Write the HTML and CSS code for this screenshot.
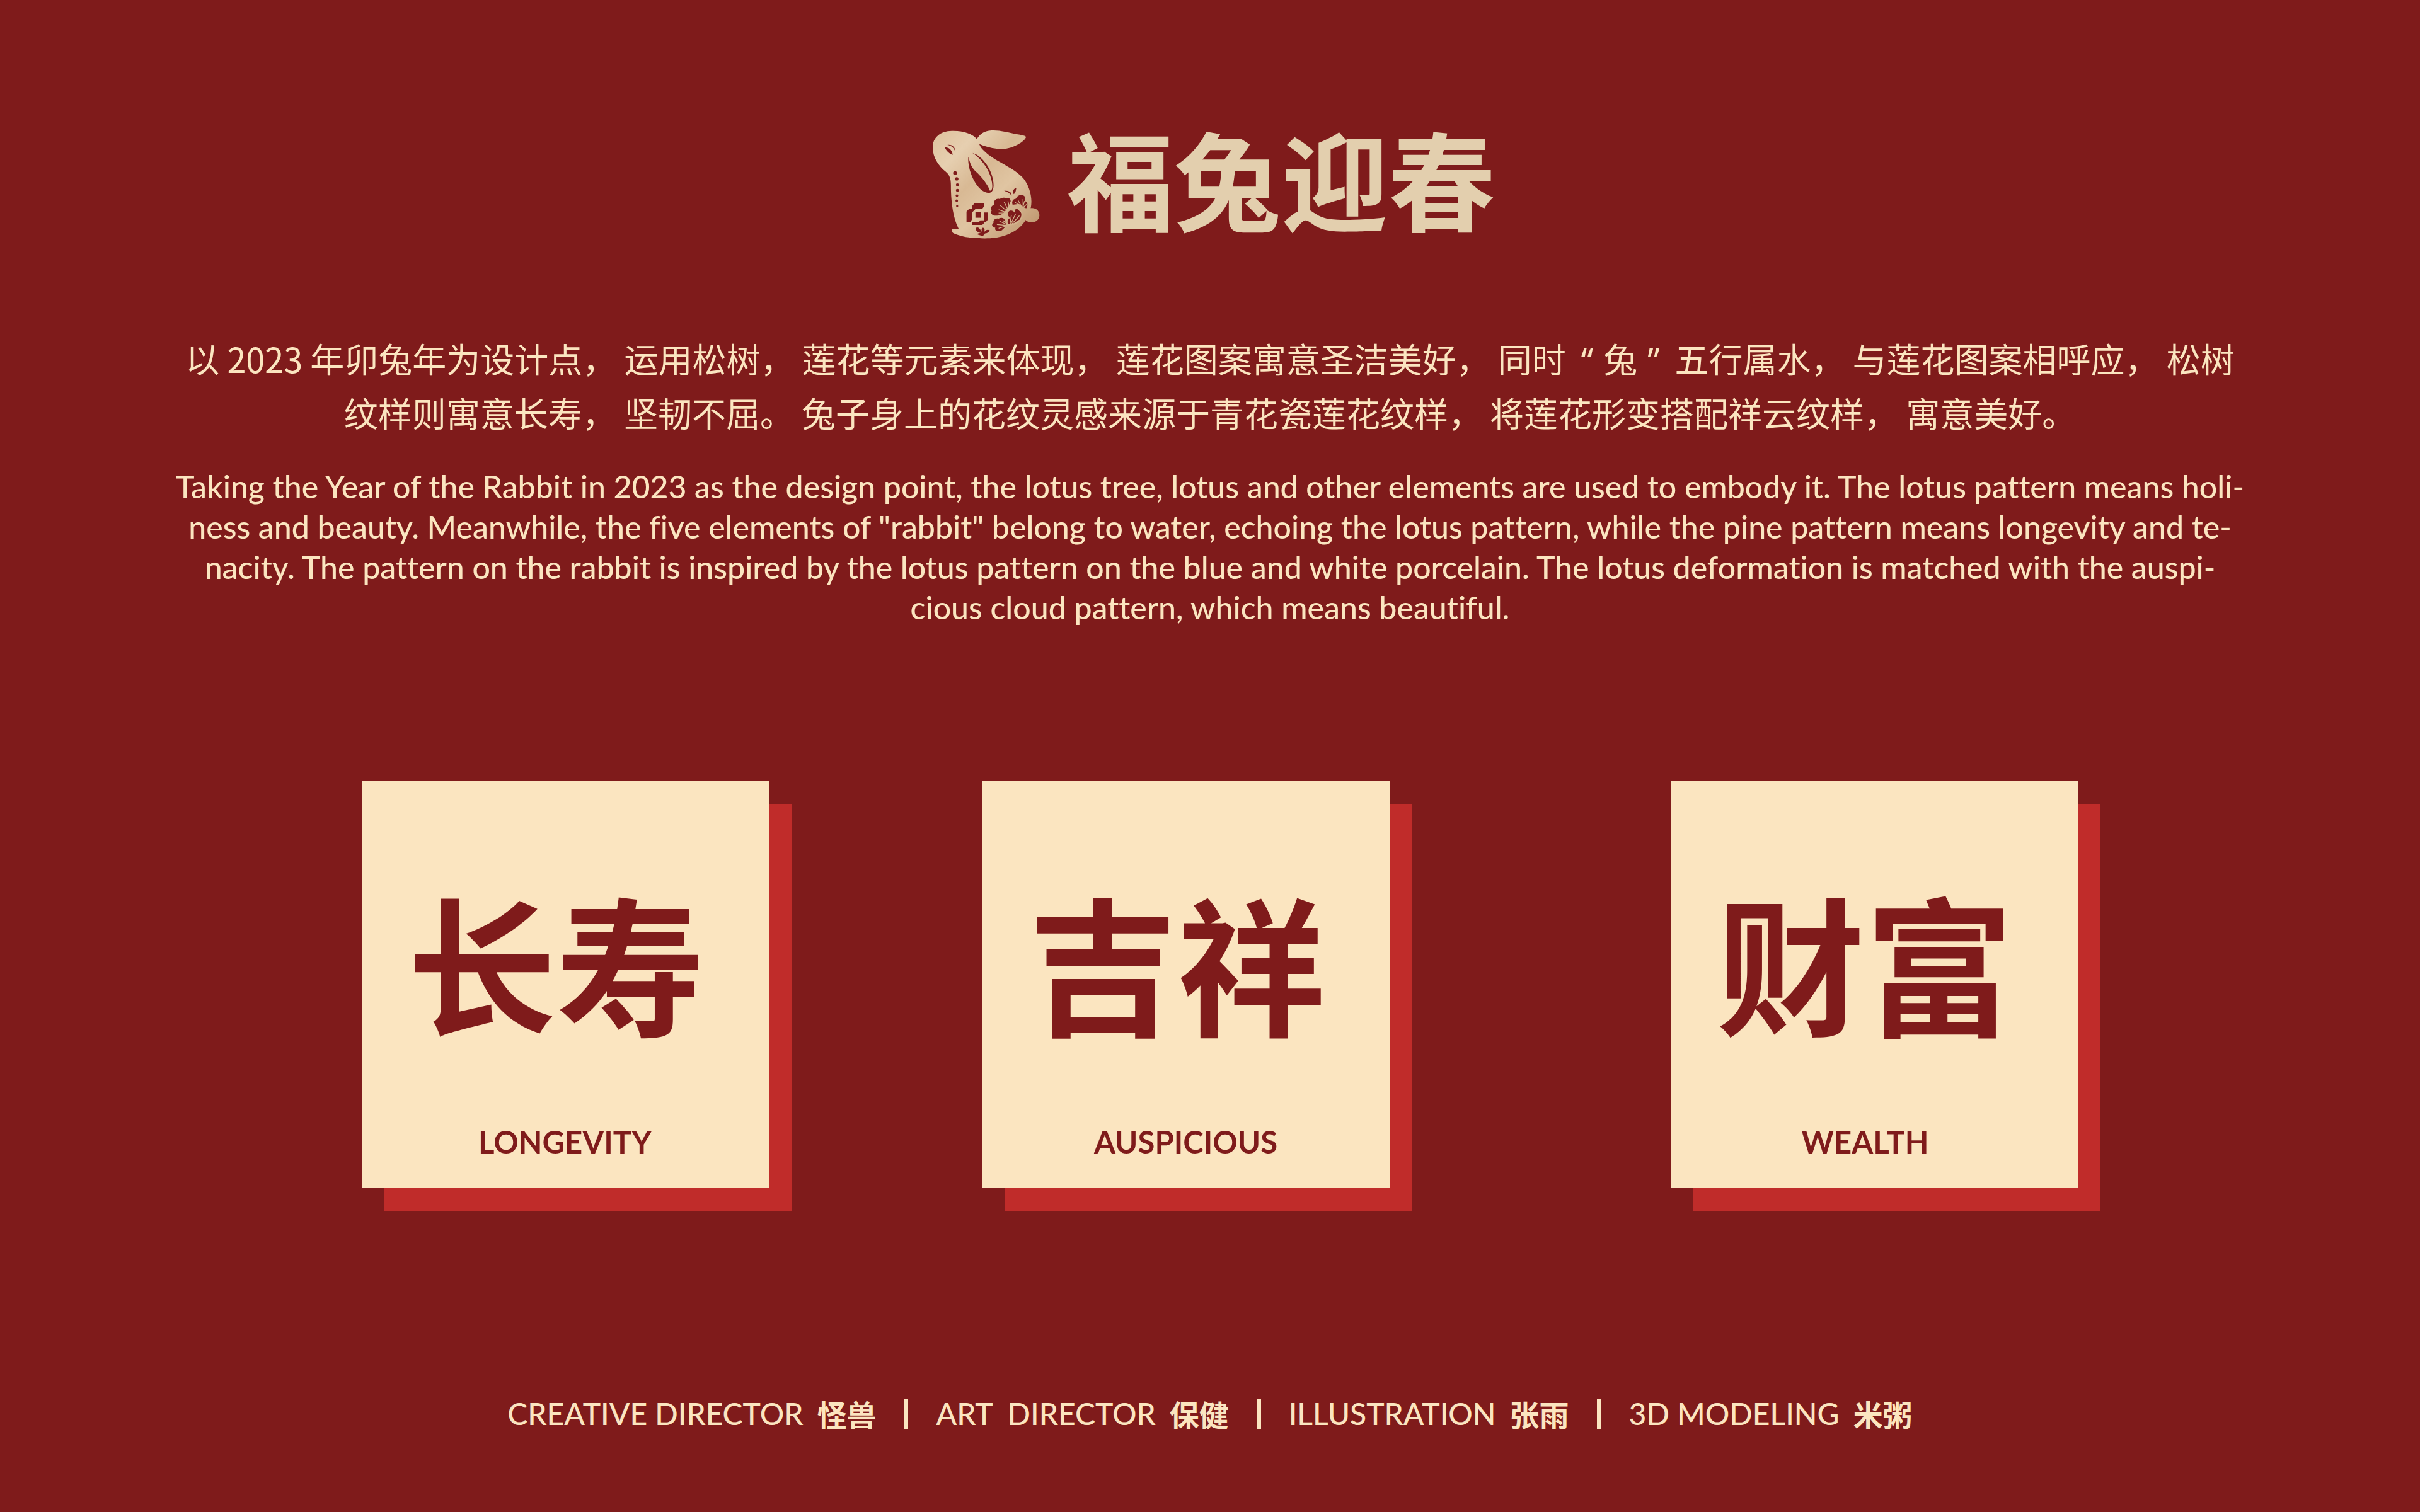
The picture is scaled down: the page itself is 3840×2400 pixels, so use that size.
FILE: index.html
```html
<!DOCTYPE html>
<html lang="zh-CN">
<head>
<meta charset="utf-8">
<meta name="viewport" content="width=device-width, initial-scale=1">
<title>福兔迎春</title>
<link rel="stylesheet" href="styles.css">
</head>
<body>
<main class="page">
  <header class="masthead">
    <svg class="rabbit" viewBox="57 48 510 516" aria-hidden="true">
      <defs>
        <linearGradient id="gold" x1="0" y1="0" x2="1" y2="1">
          <stop offset="0" stop-color="#dfc09b"/>
          <stop offset=".22" stop-color="#e6cfb0"/>
          <stop offset=".42" stop-color="#d8b994"/>
          <stop offset=".6" stop-color="#e0c5a2"/>
          <stop offset="1" stop-color="#b98f66"/>
        </linearGradient>
      </defs>
      <!-- silhouette -->
      <path fill="url(#gold)" d="M268 92C245 65 200 52 150 53C95 54 60 85 60 130C60 180 90 222 122 246C150 268 145 300 146 340C148 390 155 462 182 514L158 514C145 516 148 530 160 536C200 555 260 561 330 559C410 554 470 520 497 473C505 482 520 485 533 484C552 480 563 465 562 448C560 425 542 414 521 417C532 370 515 310 485 275C440 225 350 195 305 150C290 138 282 125 279 115C300 125 350 140 390 139C440 135 490 105 499 83C499 75 480 73 450 68C410 60 370 48 330 52C300 55 280 70 268 92Z"/>
      <g class="cut">
        <!-- eye -->
        <path d="M117 130C135 130 150 140 154 166C138 160 124 148 117 130Z"/>
        <path d="M129 119C152 116 166 130 167 153C160 132 148 122 129 119Z"/>
        <!-- folded ear -->
        <path d="M228 175C220 230 265 344 325 345C360 344 350 260 310 207C290 178 265 162 247 157C280 178 318 220 334 275C344 310 342 335 329 335C322 312 292 270 262 244C240 222 234 200 228 175Z"/>
        <!-- beads -->
        <circle cx="165" cy="252" r="9"/><circle cx="173" cy="279" r="8"/><circle cx="176" cy="307" r="7"/><circle cx="176" cy="333" r="7"/><circle cx="174" cy="358" r="6"/><circle cx="173" cy="382" r="6"/><circle cx="175" cy="407" r="5"/>
        <!-- cloud knot -->
        <path d="M256 395H303V407L293 420H262L245 437V468L238 483H219V433L230 422H245V407Z"/>
        <path d="M261 436H286V462H261Z"/>
        <path d="M302 437H320V470L311 481H302V487L293 496H246V482H278L284 474H302Z"/>
        <!-- stamens and leaf -->
        <path d="M396 334C420 334 433 342 431 359C424 345 410 342 396 334ZM454 321C435 327 438 341 441 351C452 344 450 334 454 321Z"/>
        <path d="M262 510C272 505 276 507 284 518L292 529C290 520 288 512 296 509C306 511 305 518 302 530C308 520 318 516 328 521C325 532 315 535 306 536C302 545 296 549 288 546L274 542C268 538 272 534 288 534C272 532 262 524 262 510Z"/>
        <!-- blossoms -->
        <path d="M352 452C337 450 331 438 337 429C330 415 338 404 349 402C344 382 359 368 375 374C386 366 398 366 404 371C414 364 426 370 427 384C420 404 408 425 393 440C382 450 366 452 352 452Z"/>
        <path d="M436 401C431 388 436 374 451 373C460 354 480 348 493 362C498 372 495 380 494 384C508 389 509 405 500 418L483 410L466 397Z"/>
        <path d="M371 525C353 526 352 513 355 509C338 507 335 492 346 486C344 472 355 462 370 466C384 460 395 462 400 475C412 500 398 522 371 525Z"/>
        <path class="bloom" d="M413 494C404 478 412 467 419 463C406 449 408 430 425 425C434 424 440 428 443 431C444 416 462 413 469 427C481 433 483 448 477 462C468 482 442 499 413 494Z"/>
      </g>
      <g class="rays">
        <path d="M405 436L370 424M408 430L378 404M412 420L396 388M420 412L414 384M405 440L370 440M478 412L448 390M479 412L462 381M480 412L480 374M484 412L492 384M484 414L504 398M408 498L362 494M408 494L374 478M408 500L370 512M408 488L389 474M406 504L388 521"/>
        <path d="M424 490L430 450M427 492L450 444M432 492L468 452M436 494L466 474"/>
      </g>
    </svg>
    <h1 class="title">福兔迎春</h1>
  </header>

  <section class="intro">
    <p class="intro-zh">以 2023 年卯兔年为设计点， 运用松树， 莲花等元素来体现， 莲花图案寓意圣洁美好， 同时<span class="quote open">“</span>兔<span class="quote close">”</span>五行属水， 与莲花图案相呼应， 松树<br>纹样则寓意长寿， 坚韧不屈。 兔子身上的花纹灵感来源于青花瓷莲花纹样， 将莲花形变搭配祥云纹样， 寓意美好。</p>
    <p class="intro-en" lang="en">Taking the Year of the Rabbit in 2023 as the design point, the lotus tree, lotus and other elements are used to embody it. The lotus pattern means holi-<br>ness and beauty. Meanwhile, the five elements of "rabbit" belong to water, echoing the lotus pattern, while the pine pattern means longevity and te-<br>nacity. The pattern on the rabbit is inspired by the lotus pattern on the blue and white porcelain. The lotus deformation is matched with the auspi-<br>cious cloud pattern, which means beautiful.</p>
  </section>

  <section class="cards">
    <article class="card">
      <h2 class="card-word">长寿</h2>
      <p class="card-label" lang="en">LONGEVITY</p>
    </article>
    <article class="card">
      <h2 class="card-word">吉祥</h2>
      <p class="card-label" lang="en">AUSPICIOUS</p>
    </article>
    <article class="card card-last">
      <h2 class="card-word">财富</h2>
      <p class="card-label" lang="en">WEALTH</p>
    </article>
  </section>

  <footer class="credits">
    <p class="credit"><span lang="en">CREATIVE DIRECTOR</span><b class="name">怪兽</b></p>
    <p class="credit"><span lang="en">ART&nbsp; DIRECTOR</span><b class="name">保健</b></p>
    <p class="credit"><span lang="en">ILLUSTRATION</span><b class="name">张雨</b></p>
    <p class="credit"><span lang="en">3D MODELING</span><b class="name">米粥</b></p>
  </footer>
</main>
</body>
</html>
```
FILE: styles.css
```css
:root {
  --wine: #7f1b1b;
  --red: #c02c2a;
  --cream: #fbe5c0;
  --gold: #e3cfae;
  --latin: Lato, "Noto Sans CJK SC", sans-serif;
  --han: "Noto Sans CJK SC", sans-serif;
}

* { box-sizing: border-box; }

body {
  margin: 0;
  background: var(--wine);
  color: var(--cream);
  font-family: var(--latin);
}

h1, h2, p { margin: 0; }

.page {
  min-height: 100vh;
  padding: 206px 80px 100px;
  display: flex;
  flex-direction: column;
  align-items: center;
}

.masthead {
  padding-left: 12px;
  display: flex;
  align-items: flex-start;
  gap: 42px;
}

.rabbit { width: 172px; height: 174px; }
.cut { fill: var(--wine); }
.bloom { stroke: #d2b28c; stroke-width: 6; }
.rays { fill: none; stroke: #d2b28c; stroke-width: 4; }

.title {
  font: 700 170px/150px var(--han);
  color: var(--gold);
}

.intro {
  margin-top: 146px;
  text-align: center;
}

.intro-zh { font: 400 54px/86px var(--han); }

.quote {
  font-family: "Noto Sans", sans-serif;
  line-height: 1;
}

.open { padding: 0 16px 0 24px; }
.close { padding: 0 24px 0 16px; }

.intro-en {
  margin-top: 42px;
  font: 500 50px/64px var(--latin);
  font-variant-ligatures: none;
}

.cards {
  margin-top: 244px;
  padding-left: 30px;
  display: flex;
  justify-content: center;
  gap: 339px;
}

.card {
  width: 646px;
  height: 646px;
  padding-top: 144px;
  background: var(--cream);
  color: var(--wine);
  box-shadow: 36px 36px 0 var(--red);
  text-align: center;
}

.card-last { margin-left: 107px; }

.card-word {
  padding-right: 28px;
  font: 700 236px/280px var(--han);
}

.card-label {
  margin-top: 116px;
  font: 700 49px/64px var(--latin);
}

.card-last .card-label { padding-right: 28px; }

.credits {
  margin-top: 334px;
  display: flex;
  justify-content: center;
}

.credit {
  display: flex;
  align-items: center;
  gap: 22px;
  font: 500 48px/48px var(--latin);
}

.credit + .credit::before {
  content: "";
  width: 7px;
  height: 48px;
  margin: 0 22px 0 44px;
  background: var(--cream);
}

.name { font: 700 47px/48px var(--han); }
```
